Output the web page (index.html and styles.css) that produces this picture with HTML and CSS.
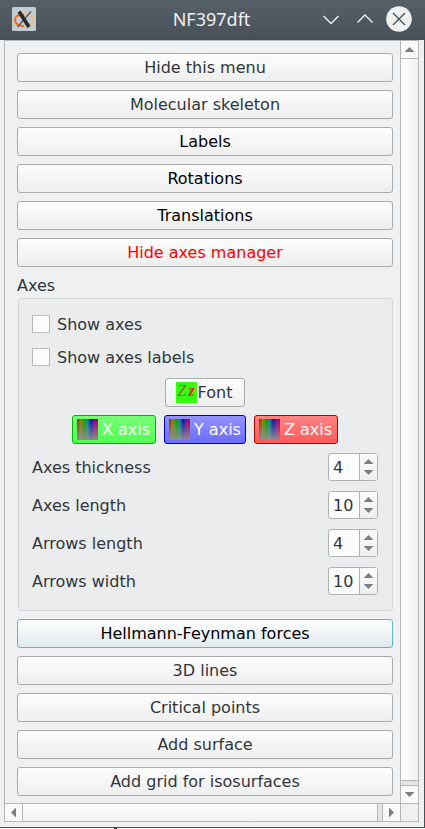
FILE: index.html
```
<!DOCTYPE html>
<html lang="en">
<head>
<meta charset="utf-8">
<title>NF397dft</title>
<link rel="stylesheet" href="styles.css">
</head>
<body>
<div class="window">
  <header class="titlebar">
    <svg class="app-icon" width="24" height="24" viewBox="0 0 24 24">
      <rect width="24" height="24" rx="1.5" fill="#c5cccf"/>
      <g fill="none">
        <path d="M12 7.500C5 7.500 2.500 10 3 13.500S7 19 12 19" stroke="#f4652a" stroke-width="1.800"/>
        <path d="M12 7.500C18 7.500 21.500 9.500 21 13S17 19 12 19" stroke="#efbd83" stroke-width="1.500"/>
        <path d="M19 4.500L5.500 20" stroke="#555a5c" stroke-width="1.400"/>
        <path d="M7 4.500L17 20" stroke="#262a2c" stroke-width="3.600"/>
      </g>
    </svg>
    <h1 class="title">NF397dft</h1>
    <svg class="controls" width="92" height="28" viewBox="0 0 92 28" fill="none">
      <path d="M3.500 11L11 18.500L18.500 11M37.500 17.500L45 10L52.500 17.500" stroke="#eff0f1" stroke-width="1.400"/>
      <circle cx="79" cy="14" r="12.800" fill="#eff0f1"/>
      <path d="M73 8L85 20M85 8L73 20" stroke="#475057" stroke-width="1.400"/>
    </svg>
  </header>
  <div class="scroll-frame">
    <main class="menu">
      <button class="btn">Hide this menu</button>
      <button class="btn">Molecular skeleton</button>
      <button class="btn strong">Labels</button>
      <button class="btn strong">Rotations</button>
      <button class="btn strong">Translations</button>
      <button class="btn alert">Hide axes manager</button>
      <h2 class="group-title">Axes</h2>
      <section class="group">
        <label class="check"><span class="box"></span>Show axes</label>
        <label class="check"><span class="box"></span>Show axes labels</label>
        <button class="btn font-btn"><span class="font-icon">Z<b>z</b></span>Font</button>
        <div class="axis-row">
          <button class="btn axis x"><span class="palette"></span>X axis</button>
          <button class="btn axis y"><span class="palette"></span>Y axis</button>
          <button class="btn axis z"><span class="palette"></span>Z axis</button>
        </div>
        <div class="field"><span class="name">Axes thickness</span><div class="spin"><span class="value">4</span><span class="steps"><i class="up"></i><i class="down"></i></span></div></div>
        <div class="field"><span class="name">Axes length</span><div class="spin"><span class="value">10</span><span class="steps"><i class="up"></i><i class="down"></i></span></div></div>
        <div class="field"><span class="name">Arrows length</span><div class="spin"><span class="value">4</span><span class="steps"><i class="up"></i><i class="down"></i></span></div></div>
        <div class="field"><span class="name">Arrows width</span><div class="spin"><span class="value">10</span><span class="steps"><i class="up"></i><i class="down"></i></span></div></div>
      </section>
      <button class="btn strong focus">Hellmann-Feynman forces</button>
      <button class="btn">3D lines</button>
      <button class="btn">Critical points</button>
      <button class="btn">Add surface</button>
      <button class="btn">Add grid for isosurfaces</button>
    </main>
    <div class="vbar">
      <span class="cap"><i class="up"></i></span>
      <span class="thumb"></span>
      <span class="track"></span>
      <span class="cap"><i class="down"></i></span>
    </div>
    <div class="hbar">
      <span class="cap"><i class="left"></i></span>
      <span class="thumb"></span>
      <span class="track"></span>
      <span class="cap"><i class="right"></i></span>
    </div>
    <div class="corner"></div>
  </div>
</div>
<div class="backdrop"><span class="speck"></span></div>
</body>
</html>
```

FILE: styles.css
```
* { box-sizing: border-box; }

body {
  margin: 0;
  width: 425px;
  height: 829px;
  overflow: hidden;
  background: #fff;
  color: #31363b;
  font: 16px/20px "DejaVu Sans", sans-serif;
}

.window {
  height: 828px;
  display: flex;
  flex-direction: column;
  background: #eff0f1;
  border-right: 1px solid #475057;
  border-bottom: 1px solid #475057;
}

.titlebar {
  height: 40px;
  flex: none;
  display: flex;
  align-items: flex-start;
  width: 425px;
  padding: 5px 13px 0 12px;
  background: linear-gradient(#566068, #475057);
}

.app-icon { margin-top: 2px; }

.title {
  flex: 1;
  margin: 3px 0 0;
  padding-left: 67px;
  text-align: center;
  font: 18px/23px "Noto Sans", sans-serif;
  color: #eff0f1;
}

.scroll-frame {
  width: 415px;
  height: 782px;
  margin-left: 4px;
  display: grid;
  grid-template-columns: 395px 18px;
  grid-template-rows: 762px 18px;
  border: 1px solid #b3b5b6;
}

.menu {
  display: flex;
  flex-direction: column;
  gap: 8px;
  padding: 12px 7px 0 12px;
}

.btn {
  height: 29px;
  padding: 0;
  display: flex;
  align-items: center;
  justify-content: center;
  border: 1px solid #a9aaab;
  border-radius: 3px;
  background: linear-gradient(#fdfdfd, #eeeeee);
  color: #31363b;
  font: inherit;
  white-space: nowrap;
  flex: none;
}

.strong { color: #000; }
.alert { color: #f00; }
.focus { border-color: #60b3dc; background: linear-gradient(#fdfefe, #e1e9ed); }

.group-title {
  margin: 0;
  height: 15px;
  font: inherit;
  line-height: 22px;
}

.group {
  height: 313px;
  margin-left: 1px;
  padding: 16px 14px 0 13px;
  display: flex;
  flex-direction: column;
  border: 1px solid #d3d5d6;
  border-radius: 3px;
  background: #ebecee;
}

.check {
  display: flex;
  align-items: center;
  gap: 7px;
  height: 20px;
  margin-bottom: 13px;
}

.box {
  width: 18px;
  height: 18px;
  margin-top: -2px;
  border: 1px solid #b8b9ba;
  background: #fcfcfc;
}

.font-btn {
  width: 80px;
  margin: -3px 0 8px 133px;
  padding-right: 2px;
}

.font-icon {
  width: 21px;
  height: 21px;
  margin-right: 1px;
  background: #35ff10;
  color: #a65a3c;
  font: italic 16px/18px "Liberation Serif", serif;
  text-align: center;
}

.font-icon b { color: #e12816; margin-left: 2px; }

.axis-row {
  display: flex;
  gap: 8px;
  margin: 0 0 9px 40px;
}

.axis {
  width: 84px;
  padding-left: 4px;
  justify-content: flex-start;
  color: #fff;
}

.axis.x { border-color: #00b400; background: linear-gradient(#77ff77, #50ff50); }
.axis.y { width: 82px; border-color: #0000b4; background: linear-gradient(#9292ff, #6c6cff); }
.axis.z { border-color: #b40000; background: linear-gradient(#ff8484, #ff5a5a); }

.palette {
  width: 21px;
  height: 21px;
  margin-right: 4px;
  background:
    linear-gradient(rgba(144, 144, 144, 0), rgba(144, 144, 144, .95)),
    linear-gradient(90deg, #a02000, #888800 18%, #00a000 37%, #009090 50%, #0010b0 67%, #900090 84%, #b00030);
}

.field {
  display: flex;
  justify-content: space-between;
  align-items: center;
  height: 28px;
  margin-bottom: 10px;
}

.name { padding-top: 2px; }

.spin {
  width: 50px;
  height: 28px;
  display: flex;
  border: 1px solid #afb0b1;
  border-radius: 3px;
  background: #fcfcfc;
}

.value { width: 30px; padding: 4px 0 0 4px; }

.steps {
  flex: 1;
  display: flex;
  flex-direction: column;
  align-items: center;
  gap: 6px;
  padding-top: 5px;
  border-left: 1px solid #afb0b1;
  background: linear-gradient(#fcfcfc, #efefef);
}

i { flex: none; display: block; width: 10px; height: 5px; background: #7d8083; }
.up { clip-path: polygon(50% 0, 100% 100%, 0 100%); }
.down { clip-path: polygon(0 0, 100% 0, 50% 100%); }
.left, .right { width: 5px; height: 10px; }
.left { clip-path: polygon(100% 0, 100% 100%, 0 50%); }
.right { clip-path: polygon(0 0, 100% 50%, 0 100%); }

.vbar {
  display: flex;
  flex-direction: column;
  border-left: 1px solid #b3b5b6;
}

.hbar {
  display: flex;
  border-top: 1px solid #b3b5b6;
}

.cap {
  width: 17px;
  height: 17px;
  flex: none;
  display: flex;
  align-items: center;
  justify-content: center;
  background: #fafafa;
}

.thumb { flex: 1; }
.vbar .thumb {
  border: solid #b3b5b6;
  border-width: 1px 0;
  background: linear-gradient(90deg, #fff, #f0f1f1);
}
.hbar .thumb {
  border: solid #b3b5b6;
  border-width: 0 1px;
  background: linear-gradient(#fff, #f0f1f1);
}

.track { flex: none; background: #e3e4e5; }
.vbar .track { height: 5px; border-bottom: 1px solid #b3b5b6; }
.hbar .track { width: 5px; border-right: 1px solid #b3b5b6; }

.corner {
  border: solid #b3b5b6;
  border-width: 1px 0 0 1px;
}

.backdrop { height: 1px; padding-left: 114px; }
.speck { display: block; width: 3px; height: 1px; background: #222; }
```
